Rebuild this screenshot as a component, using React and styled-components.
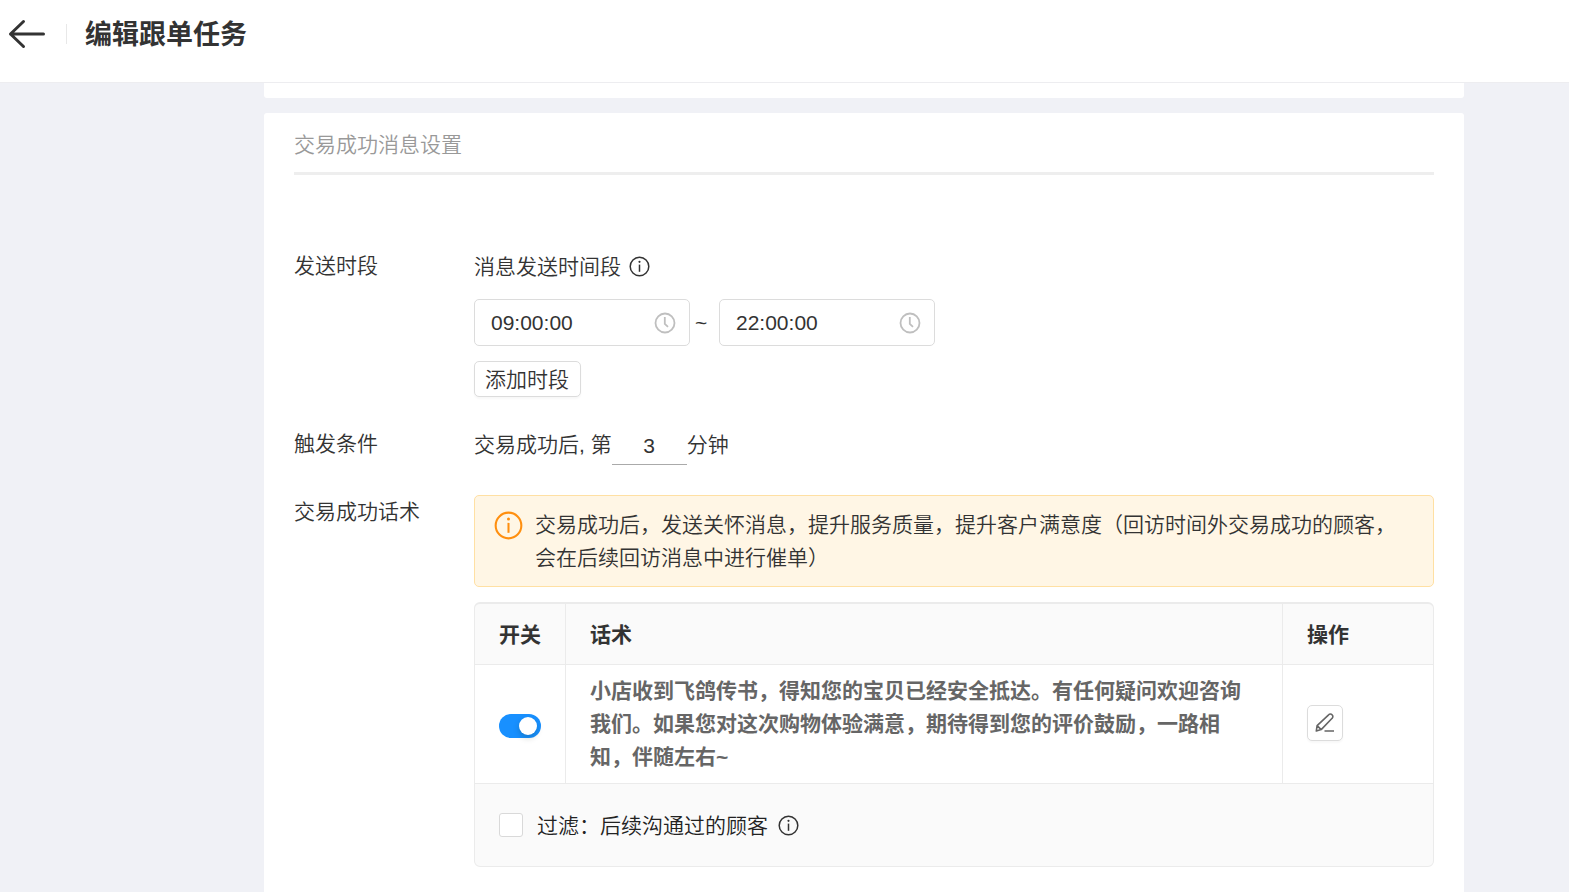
import React, { useState } from "react";
import styled, { createGlobalStyle } from "styled-components";

const GlobalStyle = createGlobalStyle`
  *, *::before, *::after {
    box-sizing: border-box;
  }

  body {
    margin: 0;
    background: #f0f1f6;
    color: #333;
    font-family: "Liberation Sans", "Noto Sans CJK SC", sans-serif;
    font-size: 21px;
    font-weight: 350;
    line-height: 33px;
  }

  button, input {
    font: inherit;
    color: inherit;
  }
`;

const Page = styled.div`
  display: flex;
  flex-direction: column;
  min-height: 100vh;
`;

const Header = styled.header`
  display: flex;
  align-items: center;
  height: 83px;
  padding: 0 8px 14px;
  background: #fff;
  border-bottom: 1px solid #ededf0;
`;

const BackButton = styled.button`
  display: flex;
  padding: 0;
  border: none;
  background: none;
  cursor: pointer;
`;

const HeaderDivider = styled.span`
  width: 1px;
  height: 20px;
  margin: 0 18px 0 20px;
  background: #e8e8e8;
`;

const PageTitle = styled.h1`
  margin: 0;
  padding-top: 2px;
  font-size: 27px;
  font-weight: 700;
`;

const Content = styled.main`
  flex: 1;
  display: flex;
  flex-direction: column;
  gap: 15px;
  padding: 0 105px 0 264px;
`;

const PrevCard = styled.section`
  height: 15px;
  background: #fff;
  border-radius: 0 0 3px 3px;
`;

const Card = styled.section`
  flex: 1;
  padding: 15px 30px 24px;
  background: #fff;
  border-radius: 3px 3px 0 0;
`;

const CardTitle = styled.h2`
  margin: 0 0 74px;
  padding-bottom: 11px;
  border-bottom: 3px solid #eee;
  color: #999;
  font-size: 21px;
  font-weight: 350;
`;

const Form = styled.form`
  display: flex;
  flex-direction: column;
  gap: 30px;
`;

const FormRow = styled.div`
  display: grid;
  grid-template-columns: 180px minmax(0, 1fr);
`;

const Stack = styled.div`
  display: flex;
  flex-direction: column;
  align-items: ${(props) => props.$align || "stretch"};
  gap: 15px;
`;

const Hint = styled.div`
  display: flex;
  align-items: center;
  gap: 8px;
  height: 35px;
`;

const TimeRange = styled.div`
  display: flex;
  align-items: center;
`;

const Tilde = styled.span`
  width: 29px;
  padding-left: 5px;
`;

const TimeBox = styled.label`
  display: flex;
  align-items: center;
  width: 216px;
  height: 47px;
  padding: 0 13px 0 16px;
  border: 1px solid #dcdcdc;
  border-radius: 5px;
  background: #fff;
`;

const TimeInput = styled.input`
  flex: 1;
  min-width: 0;
  padding: 0;
  border: none;
  outline: none;
  background: none;
`;

const AddButton = styled.button`
  height: 36px;
  padding: 0 11px 0 10px;
  border: 1px solid #dcdcdc;
  border-radius: 5px;
  background: #fff;
  box-shadow: 0 2px 2px rgba(0, 0, 0, 0.03);
  cursor: pointer;
`;

const Condition = styled.label`
  display: flex;
  line-height: 36px;
  white-space: pre;
`;

const MinuteInput = styled.input`
  width: 75px;
  height: 38px;
  padding: 0;
  border: none;
  border-bottom: 1px solid #aaa;
  outline: none;
  background: none;
  text-align: center;
`;

const Alert = styled.div`
  display: flex;
  gap: 12px;
  padding: 12px 22px 12px 19px;
  border: 1px solid #ffe0a3;
  border-radius: 5px;
  background: #fff6e5;

  & svg {
    flex: none;
    margin-top: 3px;
  }
`;

const TableBox = styled.div`
  border: 1px solid #ebebeb;
  border-top-width: 2px;
  border-radius: 6px;
  background: #fafafa;
  overflow: hidden;
`;

const Table = styled.table`
  width: 100%;
  table-layout: fixed;
  border-collapse: separate;
  border-spacing: 0;
`;

const Th = styled.th`
  width: ${(props) => props.$width || "auto"};
  height: 61px;
  padding: 1px 24px 0;
  border-bottom: 1px solid #ebebeb;
  text-align: left;
  font-weight: 700;

  & + & {
    border-left: 1px solid #ebebeb;
  }
`;

const Td = styled.td`
  padding: 9px 24px 10px;
  border-bottom: 1px solid #ebebeb;
  background: #fff;
  color: #666;
  font-weight: 700;
  vertical-align: middle;

  & + & {
    border-left: 1px solid #ebebeb;
  }
`;

const Switch = styled.input`
  appearance: none;
  display: block;
  width: 42px;
  height: 24px;
  margin: 4px 0 0;
  padding: 3px;
  border-radius: 12px;
  background: #bfbfbf;
  cursor: pointer;

  &::before {
    content: "";
    display: block;
    width: 18px;
    height: 18px;
    border-radius: 50%;
    background: #fff;
    box-shadow: 0 3px 6px rgba(0, 35, 11, 0.2);
  }

  &:checked {
    background: #1890ff;
  }

  &:checked::before {
    margin-left: 17px;
  }
`;

const EditButton = styled.button`
  display: flex;
  align-items: center;
  justify-content: center;
  width: 36px;
  height: 36px;
  margin-bottom: 2px;
  padding: 0;
  border: 1px solid #dcdcdc;
  border-radius: 5px;
  background: #fff;
  box-shadow: 0 2px 2px rgba(0, 0, 0, 0.03);
  cursor: pointer;
`;

const TableFooter = styled.div`
  display: flex;
  align-items: center;
  gap: 10px;
  height: 82px;
  padding: 0 24px;
  color: #222;
`;

const FilterLabel = styled.label`
  display: flex;
  align-items: center;
  gap: 14px;
`;

const Checkbox = styled.input`
  appearance: none;
  width: 24px;
  height: 24px;
  margin: 0;
  border: 1px solid #d9d9d9;
  border-radius: 3px;
  background: #fff;

  &:checked {
    border-color: #1890ff;
    background: #1890ff;
  }
`;

const BackIcon = () => (
  <svg width="38" height="30" viewBox="0 0 38 30" fill="none" stroke="#333" strokeWidth="3" strokeLinecap="round" strokeLinejoin="round">
    <path d="M15.500 2.500 2.500 15l13 12.500M2.500 15h33" />
  </svg>
);

const InfoIcon = ({ size = 21, color = "#333", stroke = 1.5 }) => (
  <svg width={size} height={size} viewBox="0 0 21 21" fill="none" stroke={color} strokeWidth={stroke}>
    <circle cx="10.5" cy="10.5" r="9.3" />
    <path d="M10.500 8.600v7.200" />
    <circle cx="10.5" cy="5.8" r="1.1" fill={color} stroke="none" />
  </svg>
);

const ClockIcon = () => (
  <svg width="22" height="22" viewBox="0 0 22 22" fill="none" stroke="#bfbfbf" strokeWidth="1.8">
    <circle cx="11" cy="11" r="9.5" />
    <path d="M10.800 5v6.800l3.200 3" />
  </svg>
);

const EditIcon = () => (
  <svg width="22" height="22" viewBox="0 0 22 22" fill="none" stroke="#666" strokeWidth="1.6" strokeLinejoin="round">
    <path d="M2.300 19l.8-5.300L14.600 2.800a2.400 2.400 0 0 1 3.500 0 2.400 2.400 0 0 1 0 3.500L7.200 17.600zM3.100 13.700l4.100 3.900M10.500 19h9.500" />
  </svg>
);

function TimeField({ label, value }) {
  return (
    <TimeBox>
      <TimeInput aria-label={label} defaultValue={value} />
      <ClockIcon />
    </TimeBox>
  );
}

export default function App() {
  const [enabled, setEnabled] = useState(true);

  return (
    <Page>
      <GlobalStyle />
      <Header>
        <BackButton type="button" aria-label="返回">
          <BackIcon />
        </BackButton>
        <HeaderDivider />
        <PageTitle>编辑跟单任务</PageTitle>
      </Header>
      <Content>
        <PrevCard />
        <Card>
          <CardTitle>交易成功消息设置</CardTitle>
          <Form>
            <FormRow>
              <span>发送时段</span>
              <Stack $align="flex-start">
                <Hint>
                  消息发送时间段
                  <InfoIcon />
                </Hint>
                <TimeRange>
                  <TimeField label="开始时间" value="09:00:00" />
                  <Tilde>~</Tilde>
                  <TimeField label="结束时间" value="22:00:00" />
                </TimeRange>
                <AddButton type="button">添加时段</AddButton>
              </Stack>
            </FormRow>
            <FormRow>
              <span>触发条件</span>
              <Condition>
                {"交易成功后, 第"}
                <MinuteInput defaultValue="3" />
                分钟
              </Condition>
            </FormRow>
            <FormRow>
              <span>交易成功话术</span>
              <Stack>
                <Alert>
                  <InfoIcon size={29} color="#ff8f0f" />
                  <span>
                    交易成功后，发送关怀消息，提升服务质量，提升客户满意度（回访时间外交易成功的顾客，会在后续回访消息中进行催单）
                  </span>
                </Alert>
                <TableBox>
                  <Table>
                    <thead>
                      <tr>
                        <Th $width="90px">开关</Th>
                        <Th>话术</Th>
                        <Th $width="151px">操作</Th>
                      </tr>
                    </thead>
                    <tbody>
                      <tr>
                        <Td>
                          <Switch
                            type="checkbox"
                            role="switch"
                            aria-label="开关"
                            checked={enabled}
                            onChange={(e) => setEnabled(e.target.checked)}
                          />
                        </Td>
                        <Td>
                          小店收到飞鸽传书，得知您的宝贝已经安全抵达。有任何疑问欢迎咨询我们。如果您对这次购物体验满意，期待得到您的评价鼓励，一路相知，伴随左右~
                        </Td>
                        <Td>
                          <EditButton type="button" aria-label="编辑">
                            <EditIcon />
                          </EditButton>
                        </Td>
                      </tr>
                    </tbody>
                  </Table>
                  <TableFooter>
                    <FilterLabel>
                      <Checkbox type="checkbox" />
                      过滤：后续沟通过的顾客
                    </FilterLabel>
                    <InfoIcon />
                  </TableFooter>
                </TableBox>
              </Stack>
            </FormRow>
          </Form>
        </Card>
      </Content>
    </Page>
  );
}
